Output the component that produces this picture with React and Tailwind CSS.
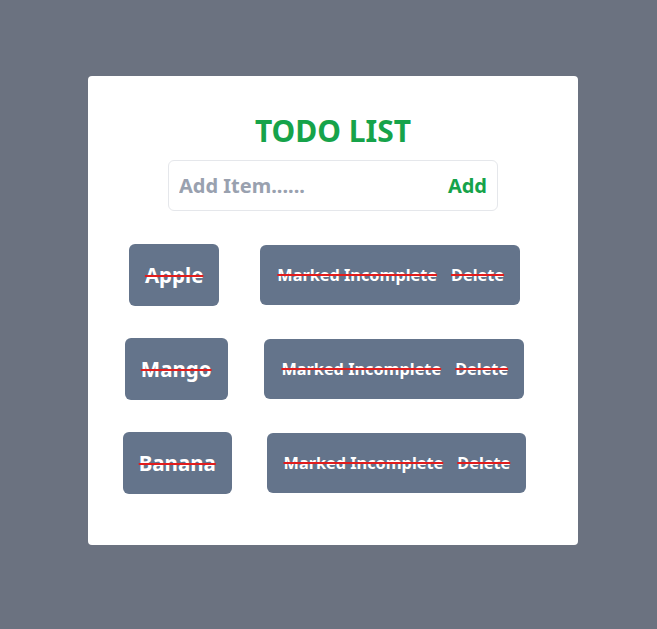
import React, { useState } from 'react';

const TodoRow = ({ name }) => {
  return (
    <div className="flex items-center justify-evenly">
      {/* item name */}
      <div className="px-4 py-[16px] bg-[#64748b] rounded-md text-white text-[20.5px] leading-[30px] font-bold line-through decoration-[#e11d1d] decoration-2">
        {name}
      </div>

      {/* actions */}
      <div className="flex items-center gap-[14px] pl-[17px] pr-[16px] py-[18px] bg-[#64748b] rounded-md text-white text-[16.3px] leading-[24px] font-bold">
        <button className="font-bold line-through decoration-[#e11d1d] decoration-2">Marked Incomplete</button>
        <button className="font-bold line-through decoration-[#e11d1d] decoration-2">Delete</button>
      </div>
    </div>
  );
};

const App = () => {
  const [items] = useState(['Apple', 'Mango', 'Banana']);

  return (
    <div
      className="min-h-[629px] w-full bg-[#6b7280] pt-[76px] pl-[88px]"
      style={{ fontFamily: '"Noto Sans", "Open Sans", sans-serif' }}
    >
      <div className="w-[490px] h-[469px] bg-white rounded-sm flex flex-col">
        <h1 className="mt-[34px] text-center text-[30px] leading-[42px] font-bold text-[#16a34a]">TODO LIST</h1>

        {/* Input */}
        <div className="mt-[8px] mx-auto w-[330px] h-[51px] flex items-center justify-between border border-gray-200 rounded-md pl-[10px] pr-[10px]">
          <input
            placeholder="Add Item......"
            className="w-[240px] text-[20px] font-bold outline-none placeholder:text-gray-400"
          />
          <button className="text-[20px] font-bold text-[#16a34a]">Add</button>
        </div>

        {/* List */}
        <div className="mt-[33px] mr-[17px] flex flex-col gap-[32px]">
          {items.map((item) => (
            <TodoRow key={item} name={item} />
          ))}
        </div>
      </div>
    </div>
  );
};

export default App;
